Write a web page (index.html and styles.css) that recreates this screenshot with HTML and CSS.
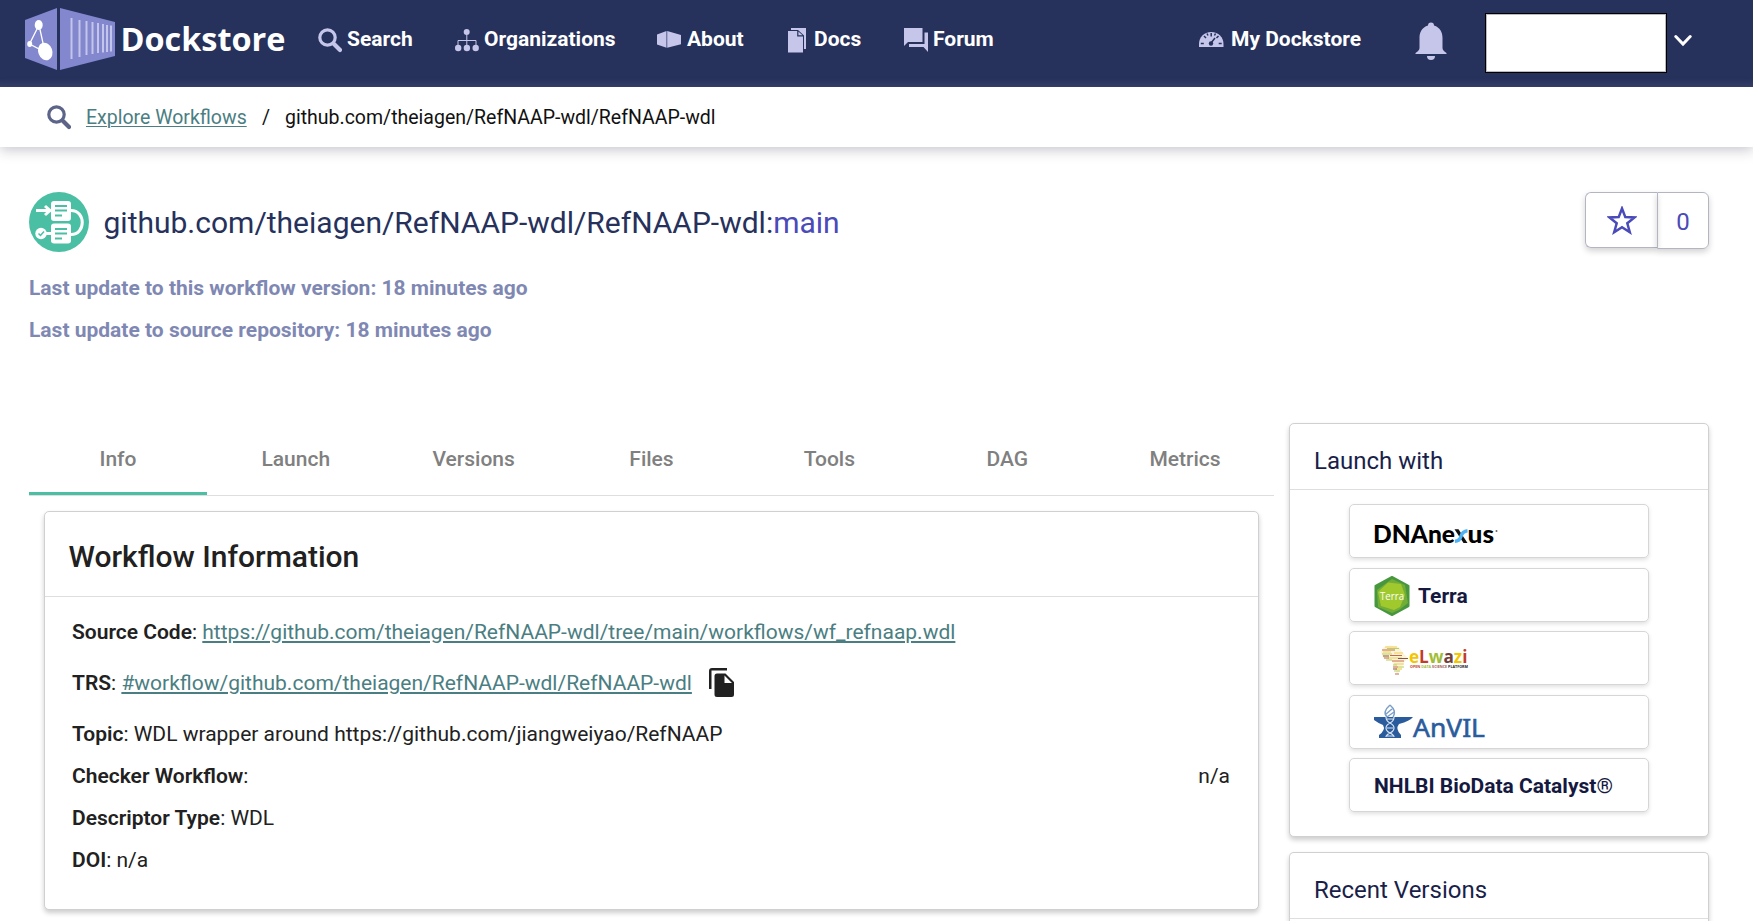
FILE: index.html
```html
<!DOCTYPE html>
<html lang="en">
<head>
<meta charset="utf-8">
<title>Dockstore</title>
<link rel="stylesheet" href="styles.css">
</head>
<body>
<header class="navbar">
  <a class="brand">
    <svg width="264" height="66" viewBox="0 0 264 66">
      <path fill="#8287ce" d="M0 14 32 2V64L0 52ZM35 2 90 16V50L35 64Z"/>
      <g stroke="#c3c6ea" stroke-width="2" fill="none"><path d="M46.500 12V53M54.500 14V51M61.500 15V49M67.500 16V48M73 17V47M78 18V46.500M82 19V46M86 19.500V45.500"/></g>
      <path d="M14 19 4.500 38 20 46Z" fill="none" stroke="#fff" stroke-width="1.300"/>
      <ellipse cx="13.700" cy="19" rx="4" ry="5" fill="#fff"/><ellipse cx="4.700" cy="38" rx="2.500" ry="3" fill="#fff"/>
      <ellipse cx="20.300" cy="45.500" rx="7" ry="9" transform="rotate(-20 20.300 45.500)" fill="#fff"/>
      <text class="brand-text" x="95.500" y="44.800" textLength="165" lengthAdjust="spacingAndGlyphs">Dockstore</text>
    </svg>
  </a>
  <nav class="nav-main">
    <a class="nav-item"><svg width="24" height="25" viewBox="0 0 24 25"><circle cx="9.500" cy="9.500" r="7.700" fill="none" stroke="#c5c6ea" stroke-width="3.200"/><path d="m16 16 6 6" stroke="#c5c6ea" stroke-width="4.200" stroke-linecap="round"/></svg><span>Search</span></a>
    <a class="nav-item"><svg width="24" height="25" viewBox="0 0 24 25" fill="#c5c6ea"><circle cx="11.700" cy="4" r="3"/><circle cx="3.200" cy="20" r="3.200"/><circle cx="11.900" cy="20" r="3.200"/><circle cx="20.700" cy="20" r="3.200"/><path d="M3 18v-5.500h18V18M11.800 7v11" stroke="#c5c6ea" stroke-width="1" fill="none"/></svg><span>Organizations</span></a>
    <a class="nav-item"><svg width="25" height="25" viewBox="0 0 25 25"><path fill="#c5c6ea" d="M0 6.500 9.500 3v16.800L0 16.500ZM10.200 3 24 7v9.300l-13.800 3.500Z"/></svg><span>About</span></a>
    <a class="nav-item"><svg width="21" height="25" viewBox="0 0 21 25"><path fill="#c5c6ea" d="M3 0H18V21H16V7.500L10 2H3ZM0 3H9.200V8.500H15V24.500H0ZM10.400 3.500 14.500 7.300H10.400Z"/></svg><span>Docs</span></a>
    <a class="nav-item forum"><svg width="25" height="25" viewBox="0 0 25 25"><path fill="#c5c6ea" d="M0 0H18.500V14H4L0 18ZM20.500 4.500H24V24L19.500 19H5V16H20.500Z"/></svg><span>Forum</span></a>
  </nav>
  <a class="nav-item mine"><svg width="25" height="25" viewBox="0 0 25 25"><path fill="#c5c6ea" d="M0 19V16C0 9 5 4 12.200 4S24.500 9 24.500 16v3Z"/><path d="M12.200 5v3.500M5 8l2 2M19.500 8l-2 2M1.800 15.500h3M19.700 15.500h3M8 5.500l1 2M16.500 5.500l-1 2M12 15l4-5" stroke="#26315c" stroke-width="1.500"/><circle cx="12" cy="15.500" r="2.200" fill="#26315c"/></svg><span>My Dockstore</span></a>
  <svg class="bell" width="32" height="39" viewBox="0 0 32 39" fill="#c5c6ea"><path d="M13 3.500a3 3 0 0 1 6 0C25 5.500 27.500 10 27.500 16V26q0 2.500 4 5v1H.5v-1q4-2.500 4-5V16C4.500 10 7 5.500 13 3.500ZM12 34h8a4 4 0 0 1-8 0Z"/></svg>
  <div class="user-box"></div>
  <svg class="chev" width="18" height="14" viewBox="0 0 18 14"><path d="m1.800 2.500 7.200 7.500 7.200-7.500" fill="none" stroke="#fff" stroke-width="3" stroke-linecap="round"/></svg>
</header>
<div class="crumbs">
  <svg width="24" height="25" viewBox="0 0 24 25"><circle cx="9.500" cy="9.500" r="7.700" fill="none" stroke="#5c6488" stroke-width="3.200"/><path d="m16 16 6 6" stroke="#5c6488" stroke-width="4.200" stroke-linecap="round"/></svg>
  <a class="link crumb-link">Explore Workflows</a><span class="slash">/</span><span class="crumb-path">github.com/theiagen/RefNAAP-wdl/RefNAAP-wdl</span>
</div>
<main class="page">
  <section class="heading">
    <div>
      <div class="title-row">
        <svg width="60" height="60" viewBox="0 0 60 60"><circle cx="30" cy="30" r="30" fill="#4bbfa3"/><rect x="22" y="9" width="20" height="20" rx="3" fill="#fff"/><rect x="22" y="31.500" width="20" height="20" rx="3" fill="#fff"/><path d="M7 18.500H21M16 14l5 4.500L16 23M42 18.500c15 0 15 24 0 24M22 41.500H12" fill="none" stroke="#fff" stroke-width="3"/><path d="M26 14h12M26 18.500h12M26 23.500h7M26 37h12M26 41.500h12M26 46.500h7" stroke="#4bbfa3" stroke-width="1.800"/><circle cx="12" cy="41.500" r="5.700" fill="#fff"/><path d="m9.500 41.500 2 2 3.500-4" fill="none" stroke="#4bbfa3" stroke-width="1.500"/></svg>
        <h1 class="title">github.com/theiagen/RefNAAP-wdl/RefNAAP-wdl:<span class="branch">main</span></h1>
      </div>
      <p class="updated">Last update to this workflow version: 18 minutes ago</p>
      <p class="updated">Last update to source repository: 18 minutes ago</p>
    </div>
    <div class="stars">
      <div class="star-btn"><svg width="30" height="29" viewBox="0 0 30 29"><path d="m15 2.500 3.300 8.600 9.200.4-7.200 5.800 2.500 8.900L15 21.200l-7.800 5 2.500-8.900-7.200-5.800 9.200-.4Z" fill="none" stroke="#4a4ab8" stroke-width="2.500"/></svg></div>
      <div class="star-count">0</div>
    </div>
  </section>
  <section class="columns">
    <div class="left">
      <div class="tabs"><div class="tab active">Info</div><div class="tab">Launch</div><div class="tab">Versions</div><div class="tab">Files</div><div class="tab">Tools</div><div class="tab">DAG</div><div class="tab">Metrics</div></div>
      <div class="card info">
        <h2 class="info-title">Workflow Information</h2>
        <div class="rows">
          <div class="row tall"><span><b>Source Code</b>: <a class="link src">https://github.com/theiagen/RefNAAP-wdl/tree/main/workflows/wf_refnaap.wdl</a></span></div>
          <div class="row tall"><span><b>TRS</b>: <a class="link trs">#workflow/github.com/theiagen/RefNAAP-wdl/RefNAAP-wdl</a></span><svg class="copy" width="25" height="29" viewBox="0 0 25 29"><path fill="#212121" d="M18 0H3Q0 0 0 3V21H2.500V2.500H18ZM8 5.500H16.500L25 14V26.500Q25 29 22.500 29H8Q5.500 29 5.500 26.500V8Q5.500 5.500 8 5.500ZM15.500 7.500V15H23Z"/></svg></div>
          <div class="row topic"><span><b>Topic</b>: WDL wrapper around https://github.com/jiangweiyao/RefNAAP</span></div>
          <div class="row"><span><b>Checker Workflow</b>:</span><span class="na">n/a</span></div>
          <div class="row"><span><b>Descriptor Type</b>: WDL</span></div>
          <div class="row"><span><b>DOI</b>: n/a</span></div>
        </div>
      </div>
    </div>
    <aside class="right">
      <div class="card launch">
        <h3 class="side-title">Launch with</h3>
        <div class="buttons">
          <div class="btn"><svg width="130" height="52" viewBox="0 0 130 52"><text class="dnx" x="-1" y="38" textLength="82" lengthAdjust="spacingAndGlyphs">DNAne</text><text class="dnx" x="93.500" y="38" textLength="26.500" lengthAdjust="spacingAndGlyphs">us</text><path d="M80.500 24.200H84.500L93.500 38H89.500Z" fill="#111"/><path d="M81 36.300q4.500 0 6-5t6.500-5.500" stroke="#4fb2f5" stroke-width="3.500" fill="none"/><circle cx="122.500" cy="26" r="1" fill="#666"/></svg></div>
          <div class="btn"><svg class="hex" width="36" height="40" viewBox="0 0 36 40"><path d="M18 1 34.500 10V30L18 39 1.500 30V10Z" fill="#47973f" stroke="#47973f" stroke-width="2" stroke-linejoin="round"/><path d="M18 3 31 9 34 27 25 34 18 37 4 31 3 14Z" fill="#72ad38"/><path d="M14 6.500 27 8 31 19 26 31 20 34 7 30 4 16Z" fill="#a0c92e"/><text class="terra-mini" x="6" y="24" textLength="24" lengthAdjust="spacingAndGlyphs">Terra</text></svg><span class="label">Terra</span></div>
          <div class="btn"><svg width="100" height="52" viewBox="0 0 100 52"><path fill="#fbf4da" d="M10 15 16 13.500 25 15 28 20 34 26 29 32 28 37 23 42 20 36 18 29 9 26 7 20Z"/><g fill="none" stroke-width="1.200"><path stroke="#f2cf4d" d="M11 15h12M9 20h8M20 21h9M14 26h14M20 32h10M22 37h6"/><path stroke="#c66b50" d="M8 18h13M16 23.500h12M10 26h5M18 29h12M19 35h5M21 42h4"/><path stroke="#b7cf68" d="M13 16.500h12M8 22h10M12 28h6M19 33h4M24 35h6M20 39h6"/><path stroke="#845548" d="M9 24h6M24 26.500h10M19 37h4"/></g><text class="elwazi" x="35" y="31" textLength="58.500" lengthAdjust="spacingAndGlyphs"><tspan fill="#f4c500">e</tspan><tspan fill="#c23d27">L</tspan><tspan fill="#9fbd36">w</tspan><tspan fill="#70413c">a</tspan><tspan fill="#f4c500">z</tspan><tspan fill="#c23d27">i</tspan></text><text class="elwazi-sub" x="36" y="36.300" textLength="58" lengthAdjust="spacingAndGlyphs"><tspan fill="#c23d27">OPEN </tspan><tspan fill="#9fbd36">DATA </tspan><tspan fill="#a35a50">SCIENCE </tspan><tspan fill="#222">PLATFORM</tspan></text></svg></div>
          <div class="btn"><svg width="115" height="52" viewBox="0 0 115 52"><path fill="#2a5b9c" d="M0 21H39Q36 25 25 28 21 33 27 39V42H5V39Q12 34 9 29 4 27 0 24Z"/><path d="M16 9q-8 7-3 12M16 9q7 6 3 12M18 13l-6 5M20 16l-7 5" stroke="#7c9fc8" stroke-width="1.500" fill="none"/><path d="M12 21q0 4 4 6t4 5-4 5-4 4M20 21q0 4-4 6t-4 5 4 5 4 4M13 23h6M13 32h6M13 40h6" stroke="#dbe7f3" stroke-width="1.200" fill="none"/><text class="anvil" x="39" y="40.500" textLength="72" lengthAdjust="spacingAndGlyphs">AnVIL</text></svg></div>
          <div class="btn"><span class="label">NHLBI BioData Catalyst<span class="reg">®</span></span></div>
        </div>
      </div>
      <div class="card recent"><h3 class="side-title">Recent Versions</h3></div>
    </aside>
  </section>
</main>
</body>
</html>
```
FILE: styles.css
```css
* { box-sizing: border-box; }
body { margin: 0; height: 921px; overflow: hidden; background: #fff; font-family: Roboto, sans-serif; font-size: 21px; color: #212121; }
svg { display: block; flex: none; }
h1, h2, h3, p { margin: 0; font-weight: 400; }
b { font-weight: 600; }

.navbar { height: 87px; padding-left: 25px; display: flex; align-items: flex-start; background: linear-gradient(#26315c 78px, #364069); color: #fff; }
.brand { padding-top: 6px; width: 293px; flex: none; }
.brand-text { font: 700 32px "Open Sans", sans-serif; fill: #fff; }
.nav-main { display: grid; grid-template-columns: 137px 202px 131px 116px 295px; flex: none; }
.nav-item { display: flex; align-items: flex-start; gap: 5px; padding-top: 28px; font-weight: 700; line-height: 22px; white-space: nowrap; }
.forum { gap: 4px; }
.mine { width: 216px; gap: 7px; flex: none; }
.bell { margin-top: 22px; }
.user-box { width: 182px; height: 60px; margin: 13px 0 0 38px; flex: none; background: #fff; border: 1px solid #000; box-shadow: inset 0 0 0 1px #bbb; }
.chev { margin: 34px 0 0 7px; }

.crumbs { height: 60px; padding: 0 0 0 47px; display: flex; align-items: center; font-size: 19.5px; color: #111; box-shadow: 0 3px 12px rgba(30, 30, 60, .25); }
.link { color: #4a7e82; text-decoration: underline; text-underline-offset: 2px; text-decoration-thickness: 1px; }
.crumb-link { margin-left: 15px; width: 161px; white-space: nowrap; }
.slash { margin-left: 15px; width: 23px; }
.crumb-path { white-space: nowrap; }

.page { padding: 45px 44px 0 29px; }
.heading { display: flex; justify-content: space-between; height: 231px; }
.title-row { display: flex; align-items: center; gap: 14.5px; margin-bottom: 15px; }
.title { padding-top: 2px; font-size: 30px; line-height: 40px; color: #26315c; white-space: nowrap; }
.branch { color: #4a4ab8; }
.updated { font-weight: 700; line-height: 42px; color: #7f88b3; }
.stars { display: flex; align-items: flex-start; }
.star-btn, .star-count { display: flex; align-items: center; justify-content: center; border: 1px solid #b3b5c3; box-shadow: 0 3px 6px rgba(0, 0, 0, .18); color: #4a4ab8; }
.star-btn { width: 72px; height: 56px; border-right: 0; border-radius: 6px 0 0 6px; }
.star-count { width: 52px; height: 57px; padding-top: 2px; border-radius: 0 6px 6px 0; font-size: 24px; }

.columns { display: flex; gap: 15px; }
.left { width: 1245px; flex: none; }
.tabs { display: grid; grid-template-columns: repeat(7, 1fr); height: 73px; border-bottom: 1px solid #dedede; }
.tab { display: flex; align-items: center; justify-content: center; font-weight: 500; color: #808080; }
.tab.active { border-bottom: 3px solid #4bbfa3; padding-top: 3px; }
.card { border: 1px solid #d0d0d3; border-radius: 5px; background: #fff; box-shadow: 0 3px 5px rgba(0, 0, 0, .2); }
.info { margin: 15px 15px 0 15px; height: 399px; }
.info-title { height: 85px; padding: 25px 0 0 23.5px; border-bottom: 1px solid #dedede; font-size: 30px; line-height: 40px; font-weight: 500; }
.rows { padding: 9px 28px 0 27px; }
.row { display: flex; align-items: center; height: 42px; }
.tall { height: 51px; }
.topic { margin-top: 5px; }
.copy { margin-left: 17px; }
.na { margin-left: auto; }
.row .link { text-decoration-thickness: 2px; }

.right { width: 420px; flex: none; }
.launch { height: 414px; }
.side-title { height: 66px; padding: 21px 0 0 24px; border-bottom: 1px solid #dedede; font-size: 24px; line-height: 32px; color: #1a1f4a; }
.buttons { padding: 14px 59px 0; display: grid; grid-auto-rows: 54px; row-gap: 9.5px; }
.btn { display: flex; align-items: center; gap: 8px; padding-left: 24px; border: 1px solid #d6d6d9; border-radius: 5px; box-shadow: 0 2px 4px rgba(0, 0, 0, .12); font-weight: 700; color: #151940; white-space: nowrap; }
.hex { margin-top: 3px; }
.label { padding-top: 2px; }
.recent { margin-top: 15px; height: 69px; border-bottom: 0; border-radius: 5px 5px 0 0; }
.reg { font-weight: 400; }
.dnx { font: 900 24px Lato, sans-serif; fill: #000; }
.terra-mini { font: 10px "Open Sans", sans-serif; fill: #fff; }
.elwazi { font: 700 17px "Open Sans", sans-serif; }
.elwazi-sub { font: 700 4px "Open Sans", sans-serif; }
.anvil { font: 26px "Noto Sans", sans-serif; fill: #2a5b9c; stroke: #2a5b9c; stroke-width: .6px; }
```
